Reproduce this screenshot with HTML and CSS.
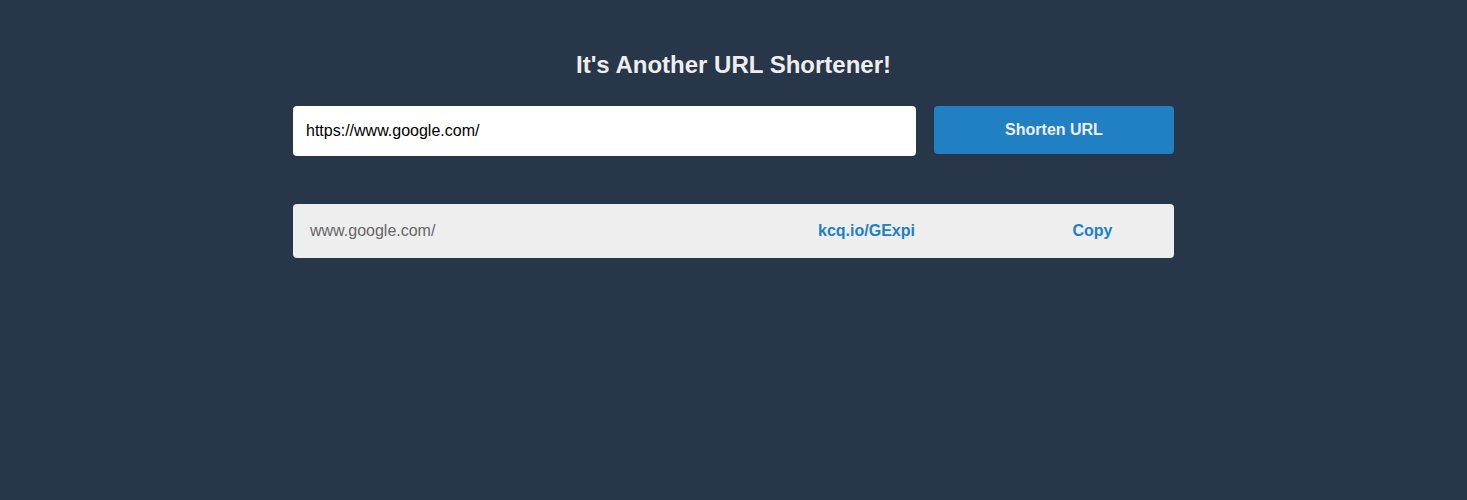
FILE: index.html
```html
<!DOCTYPE html>
<html>
<head>
<meta charset="utf-8">
<link rel="stylesheet" href="styles.css">
</head>
<body>
<main class="app">
  <h1 class="title">It's Another URL Shortener!</h1>
  <form class="shorten-form">
    <input class="url-input" type="text" value="https://www.google.com/">
    <button class="shorten-btn" type="button">Shorten URL</button>
  </form>
  <ul class="results">
    <li class="result-row">
      <span class="original">www.google.com/</span>
      <a class="short-link" href="#">kcq.io/GExpi</a>
      <button class="copy-btn" type="button">Copy</button>
    </li>
  </ul>
</main>
</body>
</html>
```
FILE: styles.css
```css
html, body {
  margin: 0;
  padding: 0;
  background: #283649;
  height: 100%;
}
body {
  font-family: "Liberation Sans", Arial, sans-serif;
}
.app {
  width: 881px;
  margin: 0 auto;
  padding-top: 49px;
}
.title {
  margin: 0;
  text-align: center;
  color: #eeeeee;
  font-size: 24px;
  font-weight: bold;
  line-height: 32px;
}
.shorten-form {
  display: flex;
  align-items: flex-start;
  gap: 18px;
  margin-top: 25px;
}
.url-input {
  flex: 1;
  box-sizing: border-box;
  height: 50px;
  border: none;
  border-radius: 4px;
  background: #ffffff;
  padding: 0 13px;
  font-family: "Liberation Sans", Arial, sans-serif;
  font-size: 16px;
  color: #000;
  outline: none;
}
.shorten-btn {
  width: 240px;
  height: 48px;
  border: none;
  border-radius: 4px;
  background: #2180c4;
  color: #eeeeee;
  font-family: "Liberation Sans", Arial, sans-serif;
  font-size: 16px;
  font-weight: bold;
  cursor: pointer;
}
.results {
  list-style: none;
  margin: 48px 0 0;
  padding: 0;
}
.result-row {
  display: flex;
  align-items: center;
  height: 54px;
  background: #eeeeee;
  border-radius: 4px;
  padding-left: 17px;
}
.original {
  flex: 1;
  color: #666666;
  font-size: 16px;
}
.short-link {
  width: 193px;
  color: #2180c4;
  font-weight: bold;
  font-size: 16px;
  text-decoration: none;
}
.copy-btn {
  width: 163px;
  border: none;
  background: transparent;
  color: #2180c4;
  font-family: "Liberation Sans", Arial, sans-serif;
  font-size: 16px;
  font-weight: bold;
  padding: 0;
  cursor: pointer;
}
```
